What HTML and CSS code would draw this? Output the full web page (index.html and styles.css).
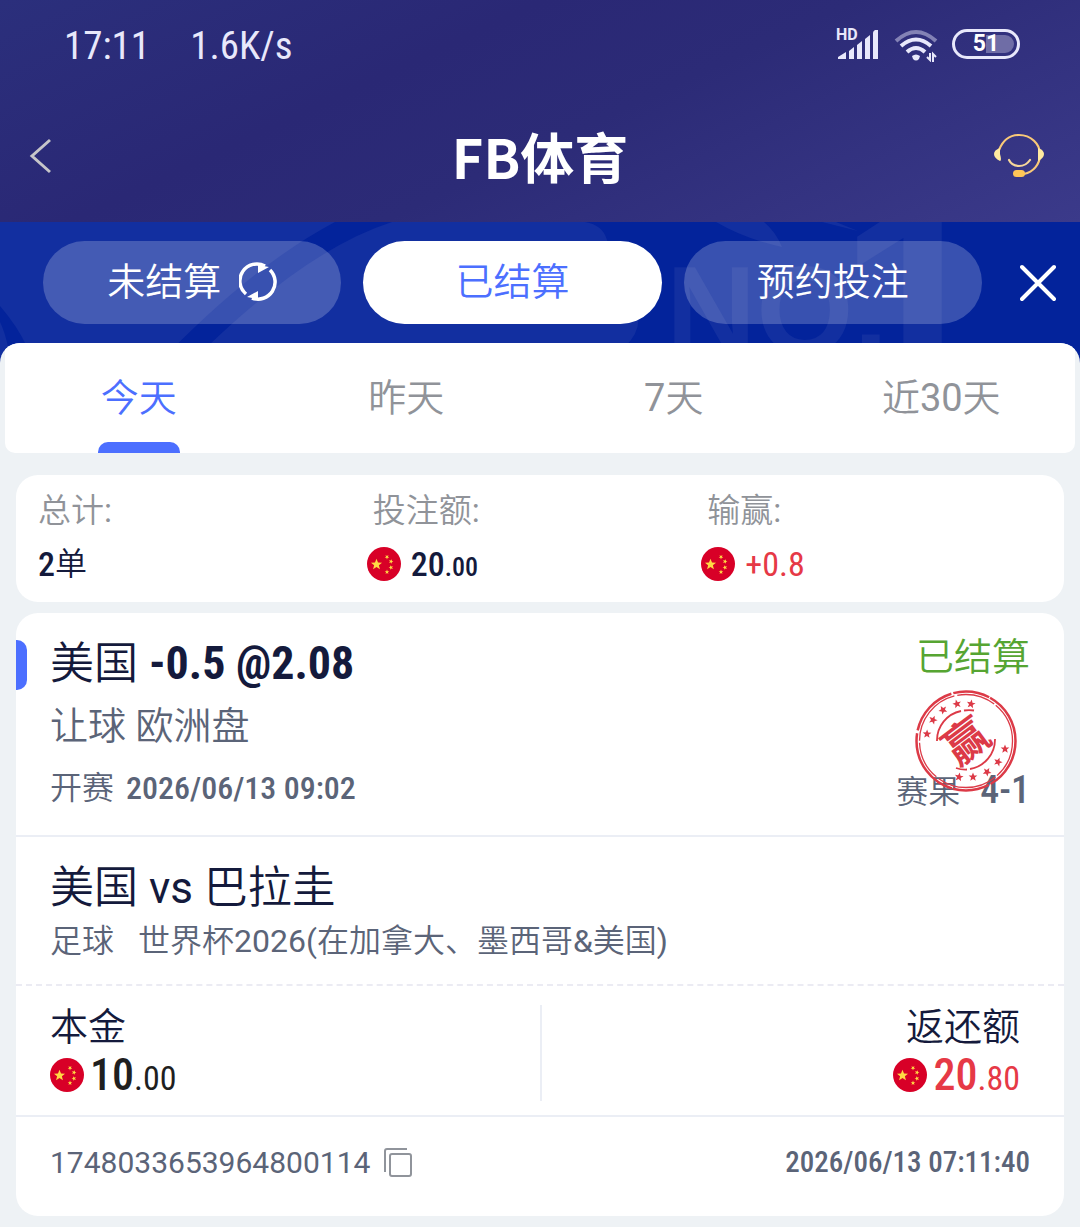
FILE: index.html
```html
<!DOCTYPE html>
<html lang="zh-CN">
<head>
<meta charset="utf-8">
<meta name="viewport" content="width=device-width, initial-scale=1">
<title>FB体育</title>
<link rel="stylesheet" href="styles.css">
</head>
<body>
<svg class="defs" aria-hidden="true">
  <defs>
    <path id="star" d="M0-10 2.6-3.4 9.5-3.1 4.1 1.3 5.9 8.1 0 4.2-5.9 8.1-4.1 1.3-9.5-3.1-2.6-3.4Z"/>
    <symbol id="flag" viewBox="0 0 34 34">
      <circle cx="17" cy="17" r="17" fill="#d80027"/>
      <g fill="#ffda44">
        <use href="#star" transform="translate(9.5 17.5) scale(.58)"/>
        <use href="#star" transform="translate(20 10) rotate(180) scale(.24)"/>
        <use href="#star" transform="translate(24 14.500) rotate(20) scale(.24)"/>
        <use href="#star" transform="translate(24 20.500) rotate(50) scale(.24)"/>
        <use href="#star" transform="translate(20 25) scale(.24)"/>
      </g>
    </symbol>
  </defs>
</svg>

<header class="top">
  <div class="status">
    <span class="status-text">17:11</span>
    <span class="status-text">1.6K/s</span>
    <div class="status-icons">
      <svg class="signal" viewBox="0 0 44 36" aria-label="HD">
        <text x="0" y="14">HD</text>
        <path d="M2 33V31L10 26V33ZM13 33V25L18 21V33ZM21 33V19L26 15V33ZM29 33V13L34 9V33ZM37 33V7Q37 5 39 4H42V33Z" fill="#e8e8fb"/>
      </svg>
      <svg class="wifi" viewBox="0 0 44 36" fill="none" stroke-width="4">
        <path d="M2 15Q22-3 42 15" stroke="#8382b5"/>
        <path d="M7 20Q22 7 37 20" stroke="#e8e8fb"/>
        <path d="M13 26Q22 18 31 26" stroke="#e8e8fb"/>
        <path d="M18 30Q22 27 26 30L25 33Q22 36 19 33Z" fill="#e8e8fb"/>
        <path d="M33 31 36 34V27M42 31 39 28V36" stroke="#e8e8fb" stroke-width="2"/>
      </svg>
      <span class="battery"><span class="battery-level"></span><span class="battery-text">51</span></span>
    </div>
  </div>
  <div class="title-bar">
    <button class="icon-btn" type="button" aria-label="返回">
      <svg width="24" height="36" viewBox="0 0 24 36" fill="none" stroke="#c6c5c9" stroke-width="3"><path d="M22 2 4 18 22 34"/></svg>
    </button>
    <h1>FB体育</h1>
    <button class="icon-btn support" type="button" aria-label="客服">
      <svg width="50" height="46" viewBox="0 0 50 46" fill="none" stroke-width="2.200" stroke-linecap="round">
        <path d="M5 17C9 7 16 2 25 2 37 2 46 11 46 21 46 32 39 39 30 41" stroke="#f9c978"/>
        <path d="M6 15Q0 17 0 21T6 28Q8 28 6 21Z" fill="#ffeaa0"/>
        <path d="M44 15Q50 17 50 21T44 28Z" fill="#ffeaa0"/>
        <path d="M15 27Q18 33 25 33T36 27" stroke="#f6d79a"/>
        <rect x="19" y="37" width="12" height="7" rx="3.500" fill="#ffc657"/>
      </svg>
    </button>
  </div>
</header>

<main>
  <nav class="modes" aria-label="注单">
    <svg class="watermark" viewBox="0 0 1080 145" preserveAspectRatio="none" aria-hidden="true">
      <path d="M0 0H585Q603 3 607 18L635 85Q645 105 625 125L600 145H0Z" fill="#122fa0"/>
      <path d="M335 0H392Q310 26 207 125L185 145H155Q250 45 335 0ZM0 84Q18 105 27 125L33 145H15L8 125Q5 110 0 100Z" fill="#03239b"/>
      <path d="M716 0Q745 17 782 25 776 10 764 0ZM822 0 858 9 836 0Z" fill="#122fa0"/>
      <text class="mark-small" x="666" y="131">NO.</text>
      <text class="mark-large" x="838" y="176">1</text>
    </svg>
    <button class="mode" type="button">未结算
      <svg width="38" height="40" viewBox="0 0 38 40" fill="none" stroke="#fff" stroke-width="3.500">
        <path d="M7 32A17 17 0 0 1 26 4M31 8A17 17 0 0 1 13 36"/>
        <path d="M19 3 30 5 19 11ZM19 37 8 35 19 29Z" fill="#fff" stroke="none"/>
      </svg>
    </button>
    <button class="mode active" type="button" aria-pressed="true">已结算</button>
    <button class="mode" type="button">预约投注</button>
    <button class="close" type="button" aria-label="关闭">
      <svg width="36" height="38" viewBox="0 0 36 38" fill="none" stroke="#fff" stroke-width="4" stroke-linecap="round"><path d="M2 3 34 35M34 3 2 35"/></svg>
    </button>
  </nav>

  <div class="sheet">
    <div class="days">
      <button class="day active" type="button">今天</button>
      <button class="day" type="button">昨天</button>
      <button class="day" type="button">7天</button>
      <button class="day" type="button">近30天</button>
    </div>

    <section class="card summary">
      <div class="stat">
        <span class="stat-label">总计:</span>
        <span class="stat-value"><span class="num">2</span>单</span>
      </div>
      <div class="stat">
        <span class="stat-label">投注额:</span>
        <span class="stat-value with-flag"><svg class="flag"><use href="#flag"/></svg><span class="num">20<small>.00</small></span></span>
      </div>
      <div class="stat">
        <span class="stat-label">输赢:</span>
        <span class="stat-value with-flag red"><svg class="flag"><use href="#flag"/></svg><span class="num">+0.8</span></span>
      </div>
    </section>

    <article class="card bet">
      <section class="pick">
        <div class="pick-main">
          <h2>美国 <b class="num">-0.5 @2.08</b></h2>
          <p class="market">让球 欧洲盘</p>
          <p class="kickoff">开赛 <span class="num">2026/06/13 09:02</span></p>
        </div>
        <div class="pick-side">
          <p class="settled">已结算</p>
          <p class="score">赛果 <span class="num">4-1</span></p>
          <svg class="stamp" viewBox="-52 -52 104 104" role="img" aria-label="赢">
            <g fill="none" stroke="#dc3a47">
              <circle r="49.500" stroke-width="2.500" stroke-dasharray="52 2 37 1 71 3"/>
              <circle r="46.500" stroke-width="1.300" stroke-dasharray="39 2 61 3"/>
              <path d="M-29 0A30 30 0 0 1-5-30M-2-30.500A31 31 0 0 1 8-30.500M29-2A30 30 0 0 1 4 28M1 28.500A29 29 0 0 1-10 27" stroke-width="1.800"/>
            </g>
            <g fill="#dc3a47">
              <use href="#star" transform="translate(-39 -7) rotate(-70) scale(.46)"/>
              <use href="#star" transform="translate(-33 -21) rotate(-50) scale(.46)"/>
              <use href="#star" transform="translate(-23 -31) rotate(-30) scale(.46)"/>
              <use href="#star" transform="translate(-9 -37) rotate(-15) scale(.46)"/>
              <use href="#star" transform="translate(5 -37) rotate(10) scale(.46)"/>
              <use href="#star" transform="translate(39 8) scale(.46)"/>
              <use href="#star" transform="translate(32 21) rotate(20) scale(.46)"/>
              <use href="#star" transform="translate(21 31) rotate(30) scale(.46)"/>
              <use href="#star" transform="translate(7 36) scale(.46)"/>
              <use href="#star" transform="translate(-7 36) rotate(10) scale(.46)"/>
            </g>
            <text class="stamp-text" text-anchor="middle" y="16" transform="rotate(-37)">赢</text>
          </svg>
        </div>
      </section>

      <section class="match">
        <h2>美国 vs 巴拉圭</h2>
        <p class="league"><span>足球</span><span>世界杯2026(在加拿大、墨西哥&amp;美国)</span></p>
      </section>

      <section class="money">
        <div class="amount">
          <span class="amount-label">本金</span>
          <span class="amount-value"><svg class="flag"><use href="#flag"/></svg><span class="num">10<small>.00</small></span></span>
        </div>
        <div class="amount payout">
          <span class="amount-label">返还额</span>
          <span class="amount-value red"><svg class="flag"><use href="#flag"/></svg><span class="num">20<small>.80</small></span></span>
        </div>
      </section>

      <footer class="order">
        <span class="order-id">1748033653964800114</span>
        <button class="icon-btn" type="button" aria-label="复制">
          <svg width="28" height="30" viewBox="0 0 28 30" fill="none" stroke="#90949b" stroke-width="2"><path d="M1 24V3Q1 1 3 1H23"/><rect x="6" y="6" width="21" height="22" rx="2"/></svg>
        </button>
        <time class="num">2026/06/13 07:11:40</time>
      </footer>
    </article>
  </div>
</main>
</body>
</html>
```
FILE: styles.css
```css
* { box-sizing: border-box; margin: 0; padding: 0; }

body {
  min-height: 100vh;
  background: #eef2f5;
  color: #141a3c;
  font-family: Roboto, "Noto Sans CJK SC DemiLight", "Noto Sans CJK SC", sans-serif;
  font-weight: 400;
}

button { border: 0; background: none; color: inherit; font: inherit; cursor: pointer; }
svg { display: block; flex: none; }
h1, h2 { font-weight: inherit; }

.defs { position: absolute; width: 0; height: 0; }
.num { font-family: "Roboto Condensed", "Liberation Sans Narrow", Roboto, sans-serif; font-weight: 500; line-height: 1; }
.red { color: #e63946; }
.icon-btn { display: flex; }
.flag { width: 34px; height: 34px; }

/* Header */
.top {
  height: 222px;
  background: linear-gradient(155deg, #2b2f7c 0%, #2a2875 35%, #2c2b77 55%, #3b3a8a 100%);
  color: #fff;
}
.status { display: flex; align-items: center; gap: 40px; height: 92px; padding: 0 60px 0 64px; }
.status-text { color: #e8e8fb; font: 400 39px/44px "Roboto Condensed", Roboto, sans-serif; }
.status-icons { display: flex; align-items: center; gap: 14px; margin-left: auto; padding-bottom: 4px; }
.signal { width: 44px; height: 36px; }
.signal text { fill: #e8e8fb; font: 700 16px Roboto, sans-serif; }
.wifi { width: 44px; height: 36px; }
.battery {
  position: relative;
  display: flex;
  align-items: center;
  justify-content: center;
  width: 68px;
  height: 30px;
  border: 3px solid #e8e8fb;
  border-radius: 15px;
}
.battery-level { position: absolute; top: 3px; right: 3px; bottom: 3px; width: 28px; border-radius: 0 9px 9px 0; background: #6f6da6; }
.battery-text { position: relative; color: #fff; font: 700 23px/24px Roboto, sans-serif; }
.title-bar { display: grid; grid-template-columns: 1fr auto 1fr; align-items: center; height: 128px; padding: 0 36px 0 28px; }
.title-bar h1 { padding-left: 8px; font: 700 54px/64px "Noto Sans CJK SC", sans-serif; }
.support { justify-self: end; }

/* Mode switch */
main { background: #03239b; }
.modes {
  position: relative;
  display: flex;
  align-items: center;
  gap: 22px;
  height: 121px;
  padding: 0 24px 0 43px;
}
.watermark { position: absolute; top: 0; left: 0; width: 100%; height: 145px; }
.watermark text { fill: #122fa0; }
.mark-small { font: 700 125px "Liberation Sans", sans-serif; }
.mark-large { font: 700 280px "Liberation Sans", sans-serif; }
.mode {
  position: relative;
  display: flex;
  flex: 1;
  align-items: center;
  justify-content: center;
  gap: 18px;
  height: 83px;
  padding-bottom: 2px;
  border-radius: 42px;
  background: rgba(255, 255, 255, .21);
  color: #fff;
  font-size: 38px;
  line-height: 44px;
}
.mode.active { background: #fff; color: #4c6fff; }
.close { position: relative; display: flex; justify-content: flex-end; width: 52px; }

/* Sheet */
.sheet {
  position: relative;
  overflow: hidden;
  padding-bottom: 11px;
  border-radius: 20px 20px 0 0;
  background: #eef2f5;
}
.days { display: flex; height: 110px; margin: 0 5px 22px; border-radius: 0 0 10px 10px; background: #fff; }
.day { position: relative; flex: 1; color: #909399; font-size: 38px; line-height: 44px; }
.day.active { color: #4c6fff; }
.day.active::after {
  content: "";
  position: absolute;
  bottom: 0;
  left: 50%;
  width: 82px;
  height: 11px;
  margin-left: -41px;
  border-radius: 10px 10px 0 0;
  background: #4c6fff;
}

.card { margin: 0 16px; border-radius: 22px; background: #fff; }
.summary { display: grid; grid-template-columns: repeat(3, 1fr); margin-bottom: 11px; padding: 14px 22px 15px; }
.stat { display: flex; flex-direction: column; gap: 8px; }
.stat-label { color: #909399; font-size: 33px; line-height: 44px; }
.stat-value { display: flex; align-items: center; height: 46px; font-size: 32px; line-height: 44px; }
.stat-value .num { font-size: 34px; }
.stat-value.red .num { font-weight: 400; }
.with-flag { gap: 10px; margin-left: -6px; }
.stat-value small { font-size: 26px; }

.pick { display: flex; justify-content: space-between; padding: 20px 34px 16px; border-bottom: 2px solid #ebeef5; }
.pick-main { position: relative; }
.pick-main::before {
  content: "";
  position: absolute;
  top: 7px;
  left: -34px;
  width: 11px;
  height: 50px;
  border-radius: 0 10px 10px 0;
  background: #4c6fff;
}
.bet h2 { font-size: 44px; line-height: 62px; }
.bet h2 .num { font-size: 46px; font-weight: 700; }
.market { color: #5b6478; font-size: 38px; line-height: 62px; }
.kickoff, .score { color: #5b6478; font-size: 32px; line-height: 62px; }
.kickoff .num { margin-left: 4px; font-size: 32px; }
.pick-side { position: relative; display: flex; flex-direction: column; justify-content: space-between; text-align: right; }
.settled { color: #56a532; font-size: 38px; line-height: 48px; }
.score { line-height: 54px; }
.score .num { margin-left: 12px; font-size: 38px; }
.stamp { position: absolute; top: 56px; right: 12px; width: 104px; height: 104px; }
.stamp-text { fill: #dc3a47; font: 700 44px "Noto Sans CJK SC", sans-serif; }

.match { padding: 20px 34px 21px; border-bottom: 2px dashed #ebebf3; }
.league { display: flex; gap: 24px; color: #5b6478; font-size: 32px; line-height: 44px; }

.money { display: grid; grid-template-columns: 1fr 1fr; padding: 19px 0 14px; border-bottom: 2px solid #ebeef5; }
.amount { display: flex; flex-direction: column; padding: 0 34px; }
.amount-label { font-size: 38px; line-height: 44px; }
.amount-value { display: flex; align-items: center; gap: 6px; height: 52px; color: #1f1f1f; line-height: 52px; }
.amount-value .num { font-size: 44px; }
.amount-value small { font-size: 34px; font-weight: 400; }
.amount-value.red { color: #e63946; }
.payout { align-items: flex-end; border-left: 2px solid #ebeef5; padding-right: 44px; }

.order { display: flex; align-items: center; gap: 14px; height: 99px; padding: 0 34px 8px; color: #5b6478; }
.order-id { font-size: 30px; }
.order .num { margin-left: auto; font-size: 29px; }
```
